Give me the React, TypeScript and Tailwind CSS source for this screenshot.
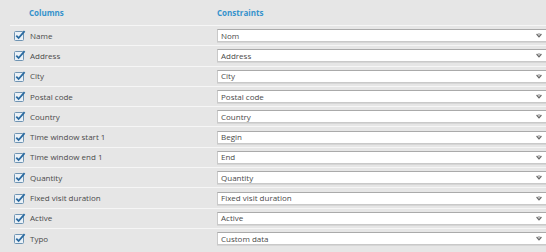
const rows = [
  ["Name", "Nom"],
  ["Address", "Address"],
  ["City", "City"],
  ["Postal code", "Postal code"],
  ["Country", "Country"],
  ["Time window start 1", "Begin"],
  ["Time window end 1", "End"],
  ["Quantity", "Quantity"],
  ["Fixed visit duration", "Fixed visit duration"],
  ["Active", "Active"],
  ["Typo", "Custom data"],
];

const CheckBox = () => (
  <svg width="12" height="11" viewBox="0 0 12 11" className="shrink-0">
    <rect x="0.5" y="1.5" width="9" height="9" rx="1" fill="#eaf1f7" stroke="#6f94b3" />
    <path d="M2.3 5.6 L4.6 8 L10.6 1.2" fill="none" stroke="#2a6aa0" strokeWidth="1.8" />
  </svg>
);

const Chevron = () => (
  <svg width="6" height="5" viewBox="0 0 6 5">
    <path d="M0.6 1 L3 3.8 L5.4 1" fill="none" stroke="#666" strokeWidth="1.2" />
    <rect x="2.5" y="0" width="1" height="2" fill="#888" />
  </svg>
);

export default function App() {
  return (
    <div
      className="w-[546px] h-[252px] overflow-hidden bg-[#e6e6e6] text-[#4a4a4a]"
      style={{ fontFamily: '"Open Sans", sans-serif' }}
    >
      <div className="flex h-[25px] items-center text-[8px] font-bold text-[#3592cc]">
        <div className="w-[217px] pl-[29px]">Columns</div>
        <div>Constraints</div>
      </div>
      <div className="ml-[10px] mr-[-4px]">
        {rows.map(([label, value]) => (
          <div
            key={label}
            className="flex h-[20.3px] items-center border-t border-[#f6f6f6]"
          >
            <div className="flex w-[207px] items-center gap-[4px] pl-[4px] text-[8px]">
              <CheckBox />
              <span>{label}</span>
            </div>
            <div className="flex h-[13px] flex-1 items-center justify-between border border-[#c9c9c9] border-t-[#aaa] bg-white pl-[3px] pr-[7px] text-[8px] shadow-[0_1px_0_#d6d6d6]">
              <span>{value}</span>
              <Chevron />
            </div>
          </div>
        ))}
      </div>
    </div>
  );
}
